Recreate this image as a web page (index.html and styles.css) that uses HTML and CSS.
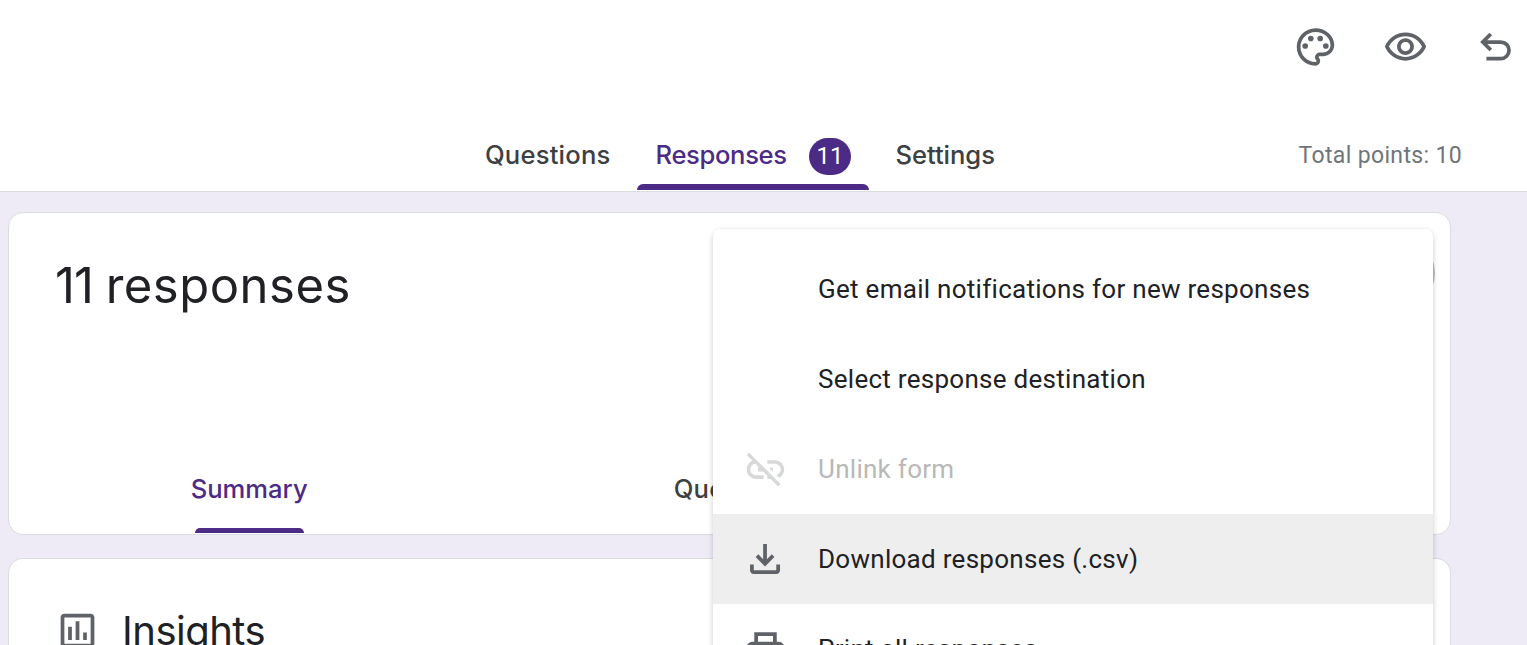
FILE: index.html
```html
<!DOCTYPE html>
<html lang="en">
<head>
<meta charset="utf-8">
<title>Form responses</title>
<link rel="stylesheet" href="styles.css">
</head>
<body>
<header class="header">
  <div class="toolbar">
    <svg class="icon" viewBox="0 .3 24 24"><path d="M12 22C6.49 22 2 17.51 2 12S6.49 2 12 2s10 4.04 10 9c0 3.31-2.69 6-6 6h-1.77c-.28 0-.5.22-.5.5 0 .12.05.23.13.33.41.47.64 1.06.64 1.67A2.5 2.5 0 0 1 12 22zm0-18c-4.41 0-8 3.59-8 8s3.59 8 8 8c.28 0 .5-.22.5-.5a.54.54 0 0 0-.14-.35c-.41-.46-.63-1.05-.63-1.65a2.5 2.5 0 0 1 2.5-2.5H16c2.21 0 4-1.79 4-4 0-3.86-3.59-7-8-7z"/><circle cx="6.5" cy="11.5" r="1.5"/><circle cx="9.5" cy="7.5" r="1.5"/><circle cx="14.5" cy="7.5" r="1.5"/><circle cx="17.5" cy="11.5" r="1.5"/></svg>
    <svg class="icon" viewBox="0 0 24 24"><path d="M12 6c3.79 0 7.17 2.13 8.82 5.5C19.17 14.87 15.79 17 12 17s-7.17-2.13-8.82-5.5C4.83 8.13 8.21 6 12 6m0-2C7 4 2.73 7.11 1 11.5 2.73 15.89 7 19 12 19s9.27-3.11 11-7.5C21.27 7.11 17 4 12 4zm0 5c1.38 0 2.5 1.12 2.5 2.5S13.38 14 12 14s-2.5-1.12-2.5-2.5S10.62 9 12 9m0-2c-2.48 0-4.5 2.02-4.5 4.5S9.52 16 12 16s4.5-2.02 4.5-4.5S14.48 7 12 7z"/></svg>
    <svg class="icon line" viewBox="-.4 .8 45 45"><path d="M10 17.8H27.3a8.35 8.35 0 0 1 0 16.7H13M17.4 9.8l-8 8 8 8"/></svg>
  </div>
  <nav class="tabs">
    <div class="tab questions">Questions</div>
    <div class="tab active"><span class="responses">Responses</span><span class="badge">11</span></div>
    <div class="tab settings">Settings</div>
    <div class="points">Total points: 10</div>
  </nav>
</header>
<main class="content">
  <section class="card summary-card">
    <h1 class="title"><span class="count">11 </span>responses</h1>
    <div class="more"></div>
    <div class="subtabs">
      <div class="subtab"><span class="current">Summary</span></div>
      <div class="subtab question"><span>Question</span></div>
      <div class="subtab"><span>Individual</span></div>
    </div>
  </section>
  <section class="card insights-card">
    <svg class="icon" viewBox="0 0 24 24"><path d="M19 3H5c-1.1 0-2 .9-2 2v14c0 1.1.9 2 2 2h14c1.1 0 2-.9 2-2V5c0-1.1-.9-2-2-2zm0 16H5V5h14v14zM7 10h2v7H7zm4-3h2v10h-2zm4 6h2v4h-2z"/></svg>
    <h2 class="insights">Insights</h2>
  </section>
</main>
<div class="menu">
  <div class="item"><span class="slot"></span>Get email notifications for new responses</div>
  <div class="item"><span class="slot"></span>Select response destination</div>
  <div class="item disabled"><svg class="icon" viewBox="0 0 24 24"><path d="M17 7h-4v1.9h4c1.71 0 3.1 1.39 3.1 3.1 0 1.43-.98 2.63-2.31 2.98l1.46 1.46C20.88 15.61 22 13.95 22 12c0-2.76-2.24-5-5-5zm-1 4h-2.19l2 2H16v-2zM2 4.27l3.11 3.11C3.29 8.12 2 9.91 2 12c0 2.76 2.24 5 5 5h4v-1.9H7c-1.71 0-3.1-1.39-3.1-3.1 0-1.59 1.21-2.9 2.76-3.07L8.73 11H8v2h2.73L13 15.27V17h1.73l4.01 4L20 19.74 3.27 3 2 4.27z"/></svg>Unlink form</div>
  <div class="item hover"><svg class="icon" viewBox=".25 .3 24 24"><path d="M12 16l-5-5 1.4-1.45 2.6 2.6V4h2v8.15l2.6-2.6L17 11l-5 5zm-6 4c-1.1 0-2-.9-2-2v-3h2v3h12v-3h2v3c0 1.1-.9 2-2 2H6z"/></svg>Download responses (.csv)</div>
  <div class="item"><svg class="icon" viewBox="0 .2 24 24"><path fill-rule="evenodd" d="M19 8h-1V3H6v5H5c-1.66 0-3 1.34-3 3v6h4v4h12v-4h4v-6c0-1.66-1.34-3-3-3zM8 5h8v3H8V5zm8 14H8v-4h8v4zm4-4h-2v-2H6v2H4v-4c0-.55.45-1 1-1h14c.55 0 1 .45 1 1v4z"/></svg>Print all responses</div>
</div>
</body>
</html>
```
FILE: styles.css
```css
* { box-sizing: border-box; }
html { overflow: hidden; }
body {
  margin: 0;
  height: 645px;
  overflow: hidden;
  position: relative;
  background: #eeebf6;
  color: #202124;
  font-family: Inter, "Liberation Sans", sans-serif;
}
.icon { width: 45px; height: 45px; flex: none; fill: #5f6368; }
.icon.line { fill: none; stroke: #5f6368; stroke-width: 3.75; }
.header { height: 192px; background: #fff; border-bottom: 1px solid #dadce0; }
.toolbar {
  display: flex;
  justify-content: flex-end;
  gap: 45px;
  height: 120px;
  padding: 25px 9px 0 0;
}
.tabs { display: flex; height: 71px; padding-left: 467px; font-size: 25.6px; font-weight: 500; line-height: 69px; color: #3c4043; white-space: nowrap; }
.tab { height: 70px; padding-left: 18px; }
.questions { width: 170px; letter-spacing: .2px; }
.active { width: 232px; display: flex; align-items: flex-start; color: #4c2b87; padding-left: 18.5px; position: relative; }
.active::after { content: ""; position: absolute; left: 0; right: 0; bottom: 0; height: 6px; background: #4c2b87; border-radius: 6px 6px 0 0; }
.responses { width: 153.5px; letter-spacing: -.35px; }
.badge { width: 42px; height: 37px; margin-top: 18px; border-radius: 18.5px; background: #4c2b87; color: #fff; font: 400 24px/37px Roboto, sans-serif; text-align: center; }
.settings { padding-left: 26.5px; width: 429.5px; letter-spacing: -.05px; }
.points { font: 400 23px/71px Roboto, sans-serif; letter-spacing: .35px; color: #70757a; }
.content { width: 1451px; padding: 20px 0 0 8px; display: flex; flex-direction: column; gap: 23px; }
.card { background: #fff; border: 1px solid #dadce0; border-radius: 15px; }
.summary-card { height: 323px; position: relative; display: flex; flex-direction: column; justify-content: space-between; }
.title { margin: 42px 0 0 46px; font-weight: 400; font-size: 49px; line-height: 62px; letter-spacing: .5px; }
.count { letter-spacing: -1px; }
.more { position: absolute; right: 15px; top: 20px; width: 80px; height: 80px; border-radius: 50%; background: #bdbdbd; }
.subtabs { display: grid; grid-template-columns: repeat(3, 1fr); height: 90px; font-size: 25.6px; font-weight: 500; line-height: 90px; letter-spacing: 0; color: #3c4043; text-align: center; }
.question { letter-spacing: .2px; }
.current { display: inline-block; position: relative; height: 90px; color: #4c2b87; }
.current::after { content: ""; position: absolute; left: 4px; right: 4px; bottom: 1px; height: 5px; border-radius: 5px 5px 0 0; background: #4c2b87; }
.insights-card { height: 87px; border-bottom: 0; border-radius: 15px 15px 0 0; display: flex; align-items: flex-start; gap: 22px; padding: 49px 0 0 46px; }
.insights { margin: 0; font-weight: 400; font-size: 40px; line-height: 46px; letter-spacing: -.5px; }
.menu { position: absolute; left: 713px; top: 229px; width: 720px; padding: 15px 0; background: #fff; border-radius: 7px; box-shadow: 0 4px 6px rgba(0,0,0,.14), 0 0 4px rgba(0,0,0,.08); font: 400 26px/90px Roboto, sans-serif; letter-spacing: .28px; }
.item { height: 90px; display: flex; align-items: center; gap: 30px; padding-left: 30px; white-space: nowrap; }
.slot { width: 45px; }
.disabled { color: #b8b8b8; }
.disabled .icon { fill: #d7d8d9; }
.hover { background: #eee; }
```
